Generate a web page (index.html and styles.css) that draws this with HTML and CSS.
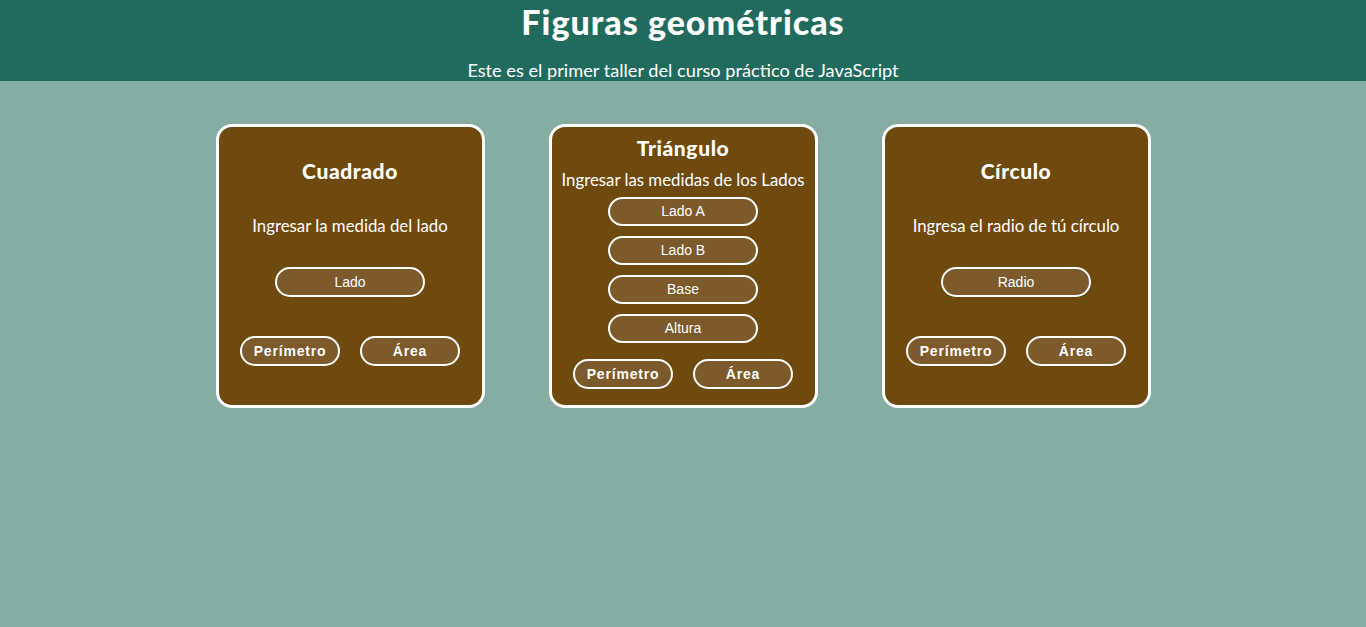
FILE: index.html
```html
<!DOCTYPE html>
<html lang="es">
<head>
<meta charset="utf-8">
<title>Figuras geométricas</title>
<link rel="stylesheet" href="styles.css">
</head>
<body>
<header class="header">
  <h1 class="header__title">Figuras geométricas</h1>
  <p class="header__subtitle">Este es el primer taller del curso práctico de JavaScript</p>
</header>
<main class="cards">
  <section class="card card--simple">
    <h2 class="card__title">Cuadrado</h2>
    <p class="card__text">Ingresar la medida del lado</p>
    <input class="card__input" type="number" placeholder="Lado">
    <div class="card__actions">
      <button class="card__btn" type="button">Perímetro</button>
      <button class="card__btn" type="button">Área</button>
    </div>
  </section>
  <section class="card card--multi">
    <h2 class="card__title">Triángulo</h2>
    <p class="card__text">Ingresar las medidas de los Lados</p>
    <div class="card__inputs">
      <input class="card__input" type="number" placeholder="Lado A">
      <input class="card__input" type="number" placeholder="Lado B">
      <input class="card__input" type="number" placeholder="Base">
      <input class="card__input" type="number" placeholder="Altura">
    </div>
    <div class="card__actions">
      <button class="card__btn" type="button">Perímetro</button>
      <button class="card__btn" type="button">Área</button>
    </div>
  </section>
  <section class="card card--simple">
    <h2 class="card__title">Círculo</h2>
    <p class="card__text">Ingresa el radio de tú círculo</p>
    <input class="card__input" type="number" placeholder="Radio">
    <div class="card__actions">
      <button class="card__btn" type="button">Perímetro</button>
      <button class="card__btn" type="button">Área</button>
    </div>
  </section>
</main>
</body>
</html>
```

FILE: styles.css
```css
* { box-sizing: border-box; }

html, body {
  margin: 0;
  padding: 0;
}

body {
  background: #86ada1;
  font-family: "Lato", "Noto Sans", sans-serif;
  color: #ffffff;
  min-height: 627px;
}

.header {
  background: #206b5e;
  height: 81px;
  text-align: center;
  padding-top: 3px;
}

.header__title {
  margin: 0;
  font-size: 34px;
  line-height: 38px;
  font-weight: 900;
  letter-spacing: 1px;
}

.header__subtitle {
  margin: 18px 0 0;
  font-size: 18.2px;
  line-height: 22px;
  font-weight: 400;
}

.cards {
  display: flex;
  justify-content: center;
  gap: 64px;
  padding-top: 43px;
}

.card {
  width: 269px;
  height: 284px;
  background: #6f4a0f;
  border: 3px solid #ffffff;
  border-radius: 16px;
  display: flex;
  flex-direction: column;
  align-items: center;
  justify-content: center;
  padding-bottom: 8px;
}

.card__title {
  margin: 0;
  font-size: 21px;
  line-height: 24px;
  font-weight: 900;
  letter-spacing: 0.6px;
}

.card__text {
  margin: 0;
  font-size: 16.8px;
  line-height: 20px;
  font-weight: 400;
}

.card__input {
  width: 150px;
  height: 30px;
  border: 2px solid #ffffff;
  border-radius: 15px;
  background: #7d5a2b;
  color: #ffffff;
  font-family: "Liberation Sans", Arial, sans-serif;
  font-size: 14px;
  text-align: center;
  outline: none;
  padding: 0 8px;
  -moz-appearance: textfield;
}

.card__input::-webkit-outer-spin-button,
.card__input::-webkit-inner-spin-button {
  -webkit-appearance: none;
  margin: 0;
}

.card__input::placeholder {
  color: #ffffff;
  opacity: 1;
}

.card__actions {
  display: flex;
  gap: 20px;
}

.card__btn {
  width: 100px;
  height: 30px;
  border: 2px solid #ffffff;
  border-radius: 15px;
  background: #7d5a2b;
  color: #ffffff;
  font-family: "Liberation Sans", Arial, sans-serif;
  font-size: 14px;
  font-weight: 700;
  letter-spacing: 0.8px;
  padding: 0;
}

.card--simple .card__text { margin-top: 33px; }
.card--simple .card__input { margin-top: 31px; }
.card--simple .card__actions { margin-top: 39px; }

.card--multi .card__text { margin-top: 10px; }

.card__inputs {
  display: flex;
  flex-direction: column;
  gap: 10px;
  margin-top: 7px;
}

.card--multi .card__input { height: 29px; }
.card--multi .card__actions { margin-top: 16px; }
```
